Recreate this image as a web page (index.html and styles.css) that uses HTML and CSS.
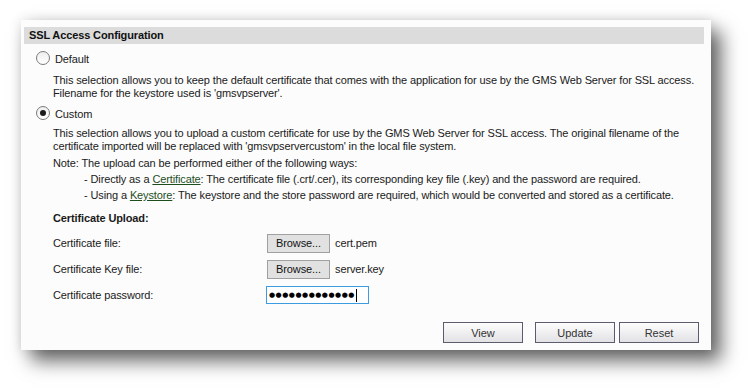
FILE: index.html
```html
<!DOCTYPE html>
<html lang="en">
<head>
  <meta charset="UTF-8">
  <title>SSL Access Configuration</title>
  <link rel="stylesheet" href="styles.css">
</head>
<body>
  <div class="panel">
    <!-- Section header -->
    <div class="section-header">SSL Access Configuration</div>

    <div class="section-body">
      <!-- Default option -->
      <label class="option">
        <span class="radio"></span>
        <span class="option-label">Default</span>
      </label>
      <p class="option-desc">
        This selection allows you to keep the default certificate that comes with the application for use by the GMS Web Server for SSL access.<br>
        Filename for the keystore used is 'gmsvpserver'.
      </p>

      <!-- Custom option -->
      <label class="option option-custom">
        <span class="radio checked"></span>
        <span class="option-label">Custom</span>
      </label>
      <p class="option-desc option-desc-custom">
        This selection allows you to upload a custom certificate for use by the GMS Web Server for SSL access. The original filename of the<br>
        certificate imported will be replaced with 'gmsvpservercustom' in the local file system.
      </p>
      <p class="note">Note: The upload can be performed either of the following ways:</p>
      <p class="note-item">- Directly as a <a href="#" class="note-link">Certificate</a>: The certificate file (.crt/.cer), its corresponding key file (.key) and the password are required.</p>
      <p class="note-item">- Using a <a href="#" class="note-link">Keystore</a>: The keystore and the store password are required, which would be converted and stored as a certificate.</p>

      <!-- Upload form -->
      <h3 class="upload-title">Certificate Upload:</h3>
      <div class="form-row">
        <span class="form-label">Certificate file:</span>
        <button type="button" class="browse-button">Browse...</button>
        <span class="file-name">cert.pem</span>
      </div>
      <div class="form-row">
        <span class="form-label">Certificate Key file:</span>
        <button type="button" class="browse-button">Browse...</button>
        <span class="file-name">server.key</span>
      </div>
      <div class="form-row form-row-password">
        <span class="form-label">Certificate password:</span>
        <div class="password-input">
          <span class="password-dots">●●●●●●●●●●●●●</span><span class="caret"></span>
        </div>
      </div>

      <!-- Actions -->
      <div class="actions">
        <button type="button" class="action-button action-view">View</button>
        <button type="button" class="action-button">Update</button>
        <button type="button" class="action-button">Reset</button>
      </div>
    </div>
  </div>
</body>
</html>
```

FILE: styles.css
```css
body {
  margin: 0;
  padding: 20px 0 0 21px;
  min-height: 100vh;
  box-sizing: border-box;
  background: #ffffff;
  font-family: 'Liberation Sans', Arial, sans-serif;
  font-size: 11px;
  letter-spacing: -0.12px;
  color: #1a1a1a;
}

p {
  margin: 0;
  white-space: nowrap;
}

/* Panel */
.panel {
  width: 690px;
  height: 330px;
  padding: 7px 7px 0 3px;
  box-sizing: border-box;
  background: #fcfcfc;
  box-shadow:
    10px 11px 18px rgba(0, 0, 0, 0.6),
    0 0 12px rgba(0, 0, 0, 0.12);
}

.section-header {
  height: 17px;
  line-height: 17px;
  padding-left: 5px;
  background: #dcdcdc;
  font-weight: bold;
  color: #111111;
}

.section-body {
  padding-left: 29px;
  display: flex;
  flex-direction: column;
}

/* Radio options */
.option {
  display: flex;
  align-items: center;
  height: 16px;
  margin-top: 7px;
  margin-left: -17px;
}

.option-custom {
  margin-top: 6px;
}

.radio {
  width: 12px;
  height: 12px;
  border: 1px solid #7a7a7a;
  border-radius: 50%;
  background: linear-gradient(#eeeeee, #ffffff);
  position: relative;
  margin-right: 5px;
  margin-top: -3px;
}

.radio.checked::after {
  content: '';
  position: absolute;
  top: 3px;
  left: 3px;
  width: 6px;
  height: 6px;
  border-radius: 50%;
  background: #1a1a1a;
}

.option-label {
  line-height: 16px;
}

.option-desc {
  line-height: 13px;
  margin-top: 7px;
}

.option-desc-custom {
  margin-top: 5px;
}

/* Note */
.note {
  line-height: 13px;
  margin-top: 4px;
}

.note-item {
  line-height: 13px;
  margin-top: 3px;
  padding-left: 31px;
}

.note-link {
  color: #1d4f1d;
  text-decoration: underline;
}

/* Upload form */
.upload-title {
  margin: 10px 0 0;
  font-size: 11px;
  font-weight: bold;
  line-height: 13px;
}

.form-row {
  display: flex;
  align-items: center;
  height: 20px;
  margin-top: 8px;
}

.form-row + .form-row {
  margin-top: 6px;
}

.form-row-password {
  margin-top: 5px;
}

.form-label {
  width: 214px;
}

.browse-button {
  width: 63px;
  height: 19px;
  padding: 0;
  border: 1px solid #a0a0a0;
  background: #e1e1e1;
  font-family: 'Liberation Sans', Arial, sans-serif;
  font-size: 11px;
  letter-spacing: -0.12px;
  color: #111111;
}

.file-name {
  margin-left: 5px;
}

.password-input {
  width: 103px;
  height: 18px;
  box-sizing: border-box;
  margin-left: -1px;
  border: 1px solid #3c9ce0;
  background: #ffffff;
  display: flex;
  align-items: center;
  padding-left: 2px;
}

.password-dots {
  font-family: 'DejaVu Sans', sans-serif;
  font-size: 7px;
  letter-spacing: 0.5px;
  color: #000000;
}

.caret {
  width: 1px;
  height: 13px;
  background: #000000;
  margin-left: 1px;
}

/* Actions */
.actions {
  display: flex;
  justify-content: flex-end;
  gap: 4px;
  margin-top: 17px;
  padding-right: 5px;
}

.action-button {
  width: 80px;
  height: 21px;
  padding: 0;
  border: 1px solid #5c5c6e;
  background: linear-gradient(#fdfdfd, #e2e2e6);
  font-family: 'Liberation Sans', Arial, sans-serif;
  font-size: 11px;
  color: #333333;
}

.action-view {
  margin-right: 8px;
}
```
